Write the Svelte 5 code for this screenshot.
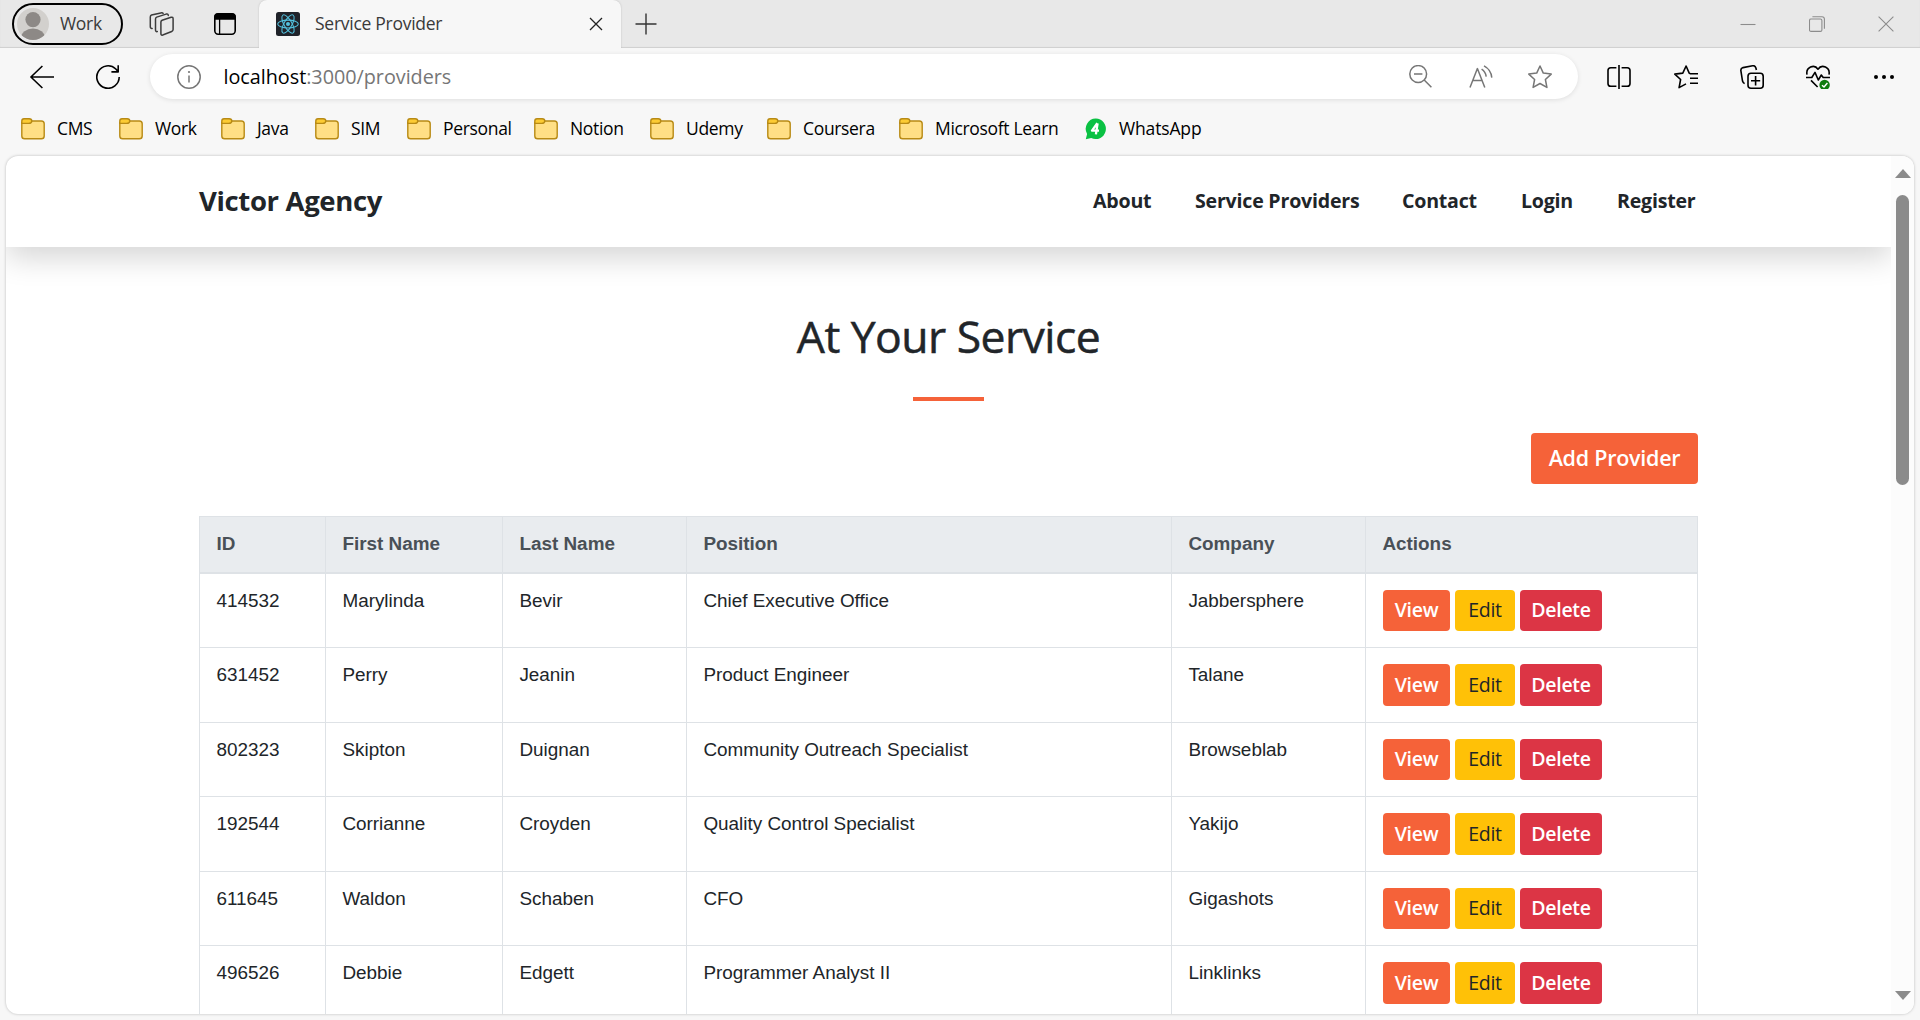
<script>
  const bookmarks = [
    { name: 'CMS', width: 98 },
    { name: 'Work', width: 102 },
    { name: 'Java', width: 94 },
    { name: 'SIM', width: 92 },
    { name: 'Personal', width: 127 },
    { name: 'Notion', width: 116 },
    { name: 'Udemy', width: 117 },
    { name: 'Coursera', width: 132 },
    { name: 'Microsoft Learn', width: 186 },
  ];

  const links = [
    { name: 'About', width: 58 },
    { name: 'Service Providers', width: 163 },
    { name: 'Contact', width: 75 },
    { name: 'Login', width: 52 },
    { name: 'Register', width: 82 },
  ];

  const columns = ['ID', 'First Name', 'Last Name', 'Position', 'Company', 'Actions'];

  const providers = [
    ['414532', 'Marylinda', 'Bevir', 'Chief Executive Office', 'Jabbersphere'],
    ['631452', 'Perry', 'Jeanin', 'Product Engineer', 'Talane'],
    ['802323', 'Skipton', 'Duignan', 'Community Outreach Specialist', 'Browseblab'],
    ['192544', 'Corrianne', 'Croyden', 'Quality Control Specialist', 'Yakijo'],
    ['611645', 'Waldon', 'Schaben', 'CFO', 'Gigashots'],
    ['496526', 'Debbie', 'Edgett', 'Programmer Analyst II', 'Linklinks'],
  ];
</script>

<div class="window">
  <div class="tabstrip">
    <div class="profile">
      <svg class="avatar" viewBox="0 0 32 32">
        <defs><clipPath id="face"><circle cx="16" cy="16" r="16" /></clipPath></defs>
        <circle cx="16" cy="16" r="16" fill="#d2d0cd" />
        <g clip-path="url(#face)" fill="#8d8986">
          <circle cx="16" cy="11.6" r="7.6" />
          <ellipse cx="16" cy="30" rx="12" ry="9.4" />
        </g>
      </svg>
      <span>Work</span>
    </div>
    <svg class="workspaces" viewBox="0 0 24 24" fill="none" stroke="#3c3c3c" stroke-width="1.5" stroke-linejoin="round" stroke-linecap="round">
      <path d="M12.6 8.2 21.6 5.3Q23.6 4.8 23.6 6.9V17.6Q23.6 19 22.2 19.5L13.2 23Q11.4 23.6 11.4 21.6V10Q11.4 8.7 12.6 8.2Z" />
      <path d="M7.8 19.6Q6 19.9 6 17.8V7Q6 5.6 7.2 5.1L16.6 2.1Q18.6 1.7 18.8 3.4" />
      <path d="M2.6 16.4Q.8 16.6.8 14.6V5Q.8 3.4 2 3L11.3.9Q13.2.6 13.6 1.4" />
    </svg>
    <svg class="vertical" viewBox="0 0 22 22" fill="none" stroke="#000" stroke-width="1.6">
      <rect x=".8" y=".8" width="20.4" height="20.4" rx="3.4" />
      <path d="M1 6V3.6Q1 1 3.6 1H18.4Q21 1 21 3.6V6Z" fill="#000" />
      <path d="M5.6 6V21" stroke-width="1.3" />
    </svg>
    <div class="tab">
      <svg class="favicon" viewBox="0 0 24 24">
        <rect width="24" height="24" rx="2.5" fill="#20232a" />
        <g fill="none" stroke="#53c1de" stroke-width="1.05">
          <ellipse cx="12" cy="12" rx="10.3" ry="3.9" />
          <ellipse cx="12" cy="12" rx="10.3" ry="3.9" transform="rotate(60 12 12)" />
          <ellipse cx="12" cy="12" rx="10.3" ry="3.9" transform="rotate(120 12 12)" />
        </g>
        <circle cx="12" cy="12" r="2" fill="#53c1de" />
      </svg>
      <span>Service Provider</span>
      <svg class="tabclose" viewBox="0 0 14 14" stroke="#222" stroke-width="1.3"><path d="M1 1 13 13M13 1 1 13" /></svg>
    </div>
    <svg class="newtab" viewBox="0 0 22 22" stroke="#333" stroke-width="1.4"><path d="M11 .5V21.5M.5 11H21.5" /></svg>
    <div class="controls">
      <svg viewBox="0 0 16 16"><path d="M.5 8.5H15.5" /></svg>
      <svg viewBox="0 0 16 16"><rect x=".5" y="3" width="12.4" height="12.4" rx="1.5" /><path d="M3.4.7H13Q15.4.7 15.4 3.1V12.8" /></svg>
      <svg viewBox="0 0 16 16"><path d="M.6.6 15.4 15.4M15.4.6.6 15.4" /></svg>
    </div>
  </div>

  <div class="toolbar">
    <svg class="back" viewBox="0 0 24 24"><path d="M12.4 1 .9 12 12.4 23M.9 12H24" /></svg>
    <svg class="reload" viewBox="0 0 24 24"><path d="M23.2 12A11.2 11.2 0 1 1 19.8 4L22 6.4M22.2.2V6.9H15.4" /></svg>
    <div class="address">
      <svg class="info" viewBox="0 0 24 24"><circle cx="12" cy="12" r="11.2" /><path d="M12 10.4V17.6" /><circle class="dot" cx="12" cy="7" r="1.1" /></svg>
      <span class="url"><b>localhost</b>:3000/providers</span>
      <svg class="lens" viewBox="0 0 24 24"><circle cx="9.2" cy="9" r="8.4" /><path d="M5 9H13.4M15.2 15 22.4 22.2" /></svg>
      <svg class="aloud" viewBox="0 0 24 24"><path d="M1 22.5 8.4 3.6 15.8 22.5M3.6 15.6H13.2M12.6 4.2Q16.6 6.8 17.2 11.6M15 .9Q22 4.6 22.8 12.6" /></svg>
      <svg class="star" viewBox="0 0 24 24"><path d="M12 1 15.3 8.1 23.2 9.1 17.4 14.5 18.9 22.4 12 18.5 5.1 22.4 6.6 14.5.8 9.1 8.7 8.1Z" /></svg>
    </div>
    <div class="tools">
      <svg viewBox="0 0 24 24"><path d="M9.4 2.8H3.8Q1 2.8 1 5.6V18.4Q1 21.2 3.8 21.2H9.4M14.6 2.8H20.2Q23 2.8 23 5.6V18.4Q23 21.2 20.2 21.2H14.6M12 0V24" /></svg>
      <svg viewBox="0 0 24 24"><path d="M24 8.7H16.1L15.2 8.1 12.1 1 8.8 8.1.8 9.1 6.6 14.5 5.1 22.6 12 18.9M16 13.3H24M16 18.2H24" /></svg>
      <svg viewBox="0 0 24 24"><rect x="8" y="8.2" width="15.2" height="15" rx="3" /><path d="M15.6 11V20.4M11 15.7H20.2M4.6 18.6Q3 17.8 2.5 16L.9 5.8Q.5 3.3 3 2.6L12.6.8Q15.2.3 15.9 3L16.4 5" /></svg>
      <svg viewBox="0 0 24 24"><path d="M1 9.6C-.4 2.5 8.2-1.6 12 4.2 15.8-1.6 24.4 2.5 23 9.6M0 12.5H5.8L9 7.4 12.3 15 15.3 10 17.2 12.5H24M5 15.4 11.6 22" /><circle class="badge" cx="18.6" cy="20" r="5.2" /><path class="check" d="M16 20.2 18 22 21.4 18" /></svg>
      <svg class="more" viewBox="0 0 24 24"><circle cx="4" cy="12" r="2" /><circle cx="12" cy="12" r="2" /><circle cx="20" cy="12" r="2" /></svg>
    </div>
  </div>

  <div class="bookmarks">
    {#each bookmarks as b}
      <div class="bookmark" style:width="{b.width}px">
        <svg viewBox="0 0 24 22" stroke="#b88a14" stroke-width="1.4">
          <path d="M.8 4V18Q.8 20.8 3.6 20.8H20.4Q23.2 20.8 23.2 18V5.8Q23.2 3 20.4 3H10" fill="#ffdf85" />
          <path d="M3 .8H8.2Q10.8.8 10.8 3 10.8 5.4 7.6 5.4H.8V3Q.8.8 3 .8Z" fill="#fccb33" />
        </svg>
        <span>{b.name}</span>
      </div>
    {/each}
    <div class="bookmark">
      <svg class="whatsapp" viewBox="0 0 21 22">
        <path d="M10.8.5A10 10.3 0 1 1 6.2 19.9L.8 21.2 2.1 16A10 10.3 0 0 1 10.8.5Z" fill="#0ac143" />
        <path d="M12.3 5.2 7 12.6H14M12.6 5.4 10.9 16.4" fill="none" stroke="#fff" stroke-width="2.3" stroke-linejoin="round" />
      </svg>
      <span>WhatsApp</span>
    </div>
  </div>

  <div class="viewport">
    <div class="page">
      <nav>
        <div class="brand">Victor Agency</div>
        <div class="links">
          {#each links as l}<a href="#top" style:width="{l.width}px">{l.name}</a>{/each}
        </div>
      </nav>
      <main>
        <h1>At Your Service</h1>
        <div class="rule"></div>
        <button class="add">Add Provider</button>
        <div class="table">
          <div class="row head">
            {#each columns as c}<div class="cell">{c}</div>{/each}
          </div>
          {#each providers as p}
            <div class="row">
              {#each p as value}<div class="cell">{value}</div>{/each}
              <div class="cell actions">
                <button class="view">View</button>
                <button class="edit">Edit</button>
                <button class="delete">Delete</button>
              </div>
            </div>
          {/each}
        </div>
      </main>
    </div>
    <div class="scrollbar">
      <svg viewBox="0 0 16 9"><path d="M8 0 16 9H0Z" /></svg>
      <div class="thumb"></div>
      <svg class="down" viewBox="0 0 16 9"><path d="M0 0H16L8 9Z" /></svg>
    </div>
  </div>
</div>

<style>
  :global(body) { background: #f7f7f7; overflow: hidden; }
  .window {
    width: 1920px; height: 1020px; display: flex; flex-direction: column;
    background: #f7f7f7; overflow: hidden; font-family: 'Open Sans', 'Noto Sans', sans-serif;
    font-size: 17.5px; color: #000;
  }
  svg { flex: none; display: block; }

  .tabstrip {
    height: 48px; box-sizing: border-box; flex: none; display: flex; align-items: center;
    background: #e8e8e8; box-shadow: inset 0 -1px 1px #cfcfcf; color: #3a3a3a;
  }
  .profile {
    width: 111px; height: 42px; box-sizing: border-box; margin-left: 12px; padding-left: 3px;
    border: 2px solid #000; border-radius: 21px; display: flex; align-items: center; gap: 11px; letter-spacing: -0.3px;
  }
  .profile span, .tab span { padding-bottom: 2px; }
  .avatar { width: 32px; height: 32px; }
  .workspaces { width: 25px; height: 24px; margin-left: 26px; }
  .vertical { width: 22px; height: 22px; margin-left: 40px; }
  .tab {
    width: 362px; height: 48px; box-sizing: border-box; margin-left: 23px; padding: 0 18px 0 17px;
    background: #f7f7f7; border-radius: 8px 8px 0 0; box-shadow: 0 0 2px #bbb; clip-path: inset(0 -3px 0 -3px);
    display: flex; align-items: center; letter-spacing: -0.27px;
  }
  .favicon { width: 24px; height: 24px; margin-right: 15px; }
  .tabclose { width: 14px; height: 14px; margin-left: auto; }
  .newtab { width: 22px; height: 22px; margin-left: 14px; }
  .controls { margin-left: auto; margin-right: 26px; display: flex; gap: 53px; }
  .controls svg { width: 16px; height: 16px; fill: none; stroke: #8c8c8c; stroke-width: 1.1; }

  .toolbar { height: 57px; flex: none; display: flex; align-items: center; }
  .toolbar svg { width: 24px; height: 24px; fill: none; stroke: #000; stroke-width: 1.6; stroke-linejoin: round; }
  .toolbar .back { margin-left: 30px; }
  .toolbar .reload { margin: 0 30px 0 42px; }
  .address {
    width: 1428px; height: 45px; border-radius: 23px; background: #fff; flex: none;
    box-shadow: 0 1px 5px rgba(0, 0, 0, 0.1); display: flex; align-items: center; font-size: 19.8px; color: #767676;
  }
  .address svg { stroke: #767676; stroke-width: 1.5; }
  .address .info { margin-left: 27px; margin-right: 22.5px; }
  .info .dot { fill: #767676; stroke: none; }
  .url { letter-spacing: -0.02px; margin-right: auto; padding-bottom: 1px; }
  .url b { font-weight: 400; color: #000; }
  .address .aloud { margin-left: 36px; }
  .address .star { margin: 0 26px 0 35px; }
  .tools { display: flex; gap: 42.2px; margin-left: 29.4px; }
  .tools .badge { fill: #107c10; stroke: none; }
  .tools .check { stroke: #fff; stroke-width: 1.4; }
  .tools .more { fill: #000; stroke: none; }

  .bookmarks { height: 51px; flex: none; padding: 0 0 4px 21px; display: flex; align-items: center; box-sizing: border-box; letter-spacing: -0.33px; }
  .bookmark { display: flex; align-items: center; gap: 12px; white-space: nowrap; flex: none; }
  .bookmark span { padding-bottom: 1px; }
  .bookmark svg { width: 24px; height: 22px; }
  .bookmark .whatsapp { width: 21px; height: 22px; }
  .bookmark .whatsapp + span { margin-left: 1px; letter-spacing: -0.15px; }

  .viewport {
    width: 1908px; height: 858px; margin-left: 6px; flex: none; display: flex; overflow: hidden;
    background: #fff; border-radius: 12px; box-shadow: 0 0 3px rgba(0, 0, 0, 0.25);
  }
  .page { width: 1885px; overflow: hidden; color: #212529; }
  nav {
    height: 91px; box-sizing: border-box; padding: 0 192px 3px 193px; display: flex; align-items: center;
    justify-content: space-between; box-shadow: 0 11px 30px rgba(0, 0, 0, 0.165);
  }
  .brand { font-size: 27.5px; font-weight: 700; letter-spacing: -0.35px; }
  .links { display: flex; gap: 44px; }
  .links a { color: inherit; text-decoration: none; white-space: nowrap; font-size: 19.6px; font-weight: 700; letter-spacing: -0.22px; }
  main { padding-left: 193px; width: 1499px; display: flex; flex-direction: column; align-items: center; }
  h1 { margin: 54px 0 0; font-size: 44.5px; font-weight: 500; line-height: 70px; letter-spacing: -0.55px; -webkit-text-stroke: 0.5px #212529; }
  .rule { width: 71px; height: 4px; margin-top: 26px; background: #f56239; }
  button { border: 0; padding: 0; font-family: inherit; color: #fff; border-radius: 4px; }
  .add {
    align-self: flex-end; width: 167px; height: 51px; margin-top: 32px; padding-bottom: 2px; background: #f56239;
    font-size: 21.5px; font-weight: 600; letter-spacing: -0.25px;
  }
  .table {
    width: 1499px; box-sizing: border-box; margin-top: 32px; border: solid #dee2e6; border-width: 1px 0 0 1px;
    font-family: 'Liberation Sans', Arial, sans-serif; font-size: 18.9px;
  }
  .row { display: grid; grid-template-columns: 126px 177px 184px 485px 194px 332px; height: 74.5px; }
  .cell { box-sizing: border-box; border: solid #dee2e6; border-width: 0 1px 1px 0; padding: 15.4px 0 0 16.4px; line-height: 24px; }
  .head { height: 56.6px; font-weight: 700; color: #495057; background: #e9ecef; }
  .head .cell { border-bottom-width: 2px; padding-top: 15.4px; }
  .actions { display: flex; gap: 5px; align-items: flex-start; padding: 16.4px 0 0 17px; font-family: 'Open Sans', sans-serif; }
  .actions button { height: 41.2px; padding-bottom: 2px; font-size: 19.5px; font-weight: 600; letter-spacing: -0.25px; }
  .view { width: 67px; background: #f56239; }
  .edit { width: 60px; background: #ffc107; color: #212529; }
  .delete { width: 82px; background: #dc3545; }
  .actions .edit { font-weight: 500; }

  .scrollbar { width: 23px; background: #fcfcfc; display: flex; flex-direction: column; align-items: center; padding: 13px 0 14px; box-sizing: border-box; }
  .scrollbar svg { width: 16px; height: 9px; fill: #8b8b8b; }
  .thumb { width: 13px; height: 290px; margin-top: 17px; border-radius: 7px; background: #8b8b8b; }
  .scrollbar .down { margin-top: auto; }
</style>
